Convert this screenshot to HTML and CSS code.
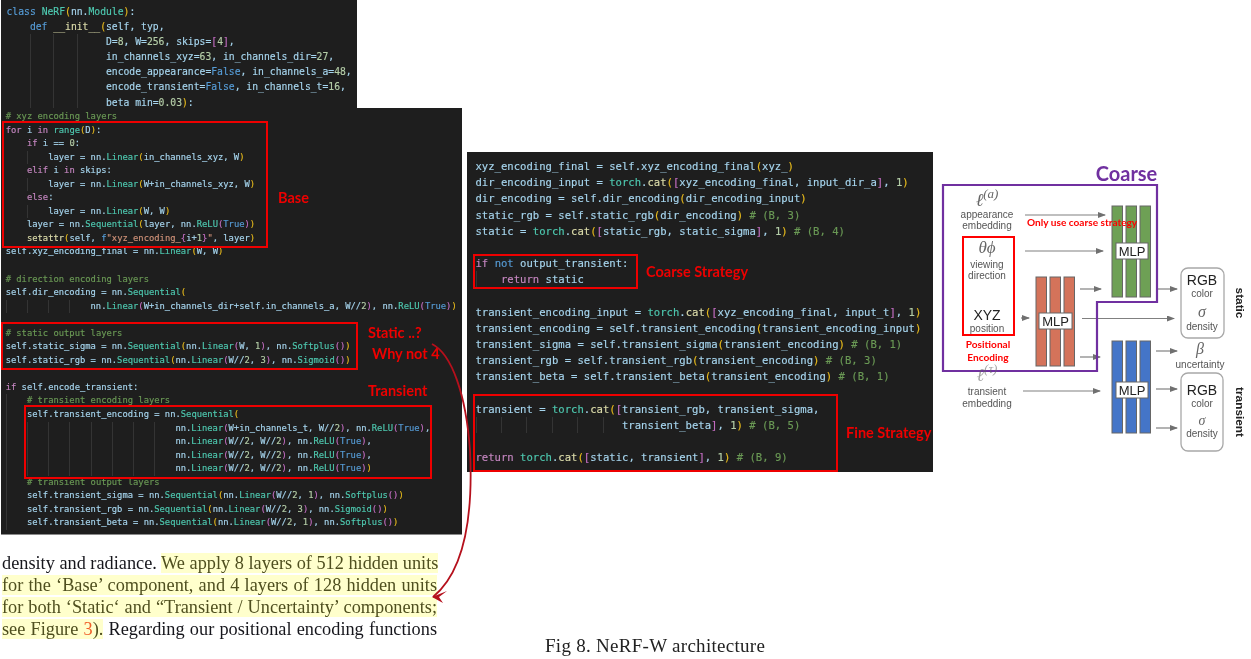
FILE: index.html
```html
<!DOCTYPE html>
<html lang="en">
<head>
<meta charset="utf-8">
<title>Fig 8. NeRF-W architecture</title>
<link rel="stylesheet" href="styles.css">
</head>
<body>
<main class="canvas">

<section class="panel p1">
<div class="l"><span class="b">class</span> <span class="c">NeRF</span><span class="y">(</span>nn.<span class="c">Module</span><span class="y">)</span>:</div>
<div class="l">    <span class="b">def</span> <span class="f">__init__</span><span class="y">(</span>self, typ,</div>
<div class="l">    <i class="g"></i><i class="g"></i><i class="g"></i> D=<span class="n">8</span>, W=<span class="n">256</span>, skips=<span class="p">[</span><span class="n">4</span><span class="p">]</span>,</div>
<div class="l">    <i class="g"></i><i class="g"></i><i class="g"></i> in_channels_xyz=<span class="n">63</span>, in_channels_dir=<span class="n">27</span>,</div>
<div class="l">    <i class="g"></i><i class="g"></i><i class="g"></i> encode_appearance=<span class="b">False</span>, in_channels_a=<span class="n">48</span>,</div>
<div class="l">    <i class="g"></i><i class="g"></i><i class="g"></i> encode_transient=<span class="b">False</span>, in_channels_t=<span class="n">16</span>,</div>
<div class="l">    <i class="g"></i><i class="g"></i><i class="g"></i> beta_min=<span class="n">0.03</span><span class="y">)</span>:</div>
</section>

<section class="panel p2">
<div class="l"><span class="m"># xyz encoding layers</span></div>
<div class="l"><span class="k">for</span> i <span class="k">in</span> <span class="f2">range</span><span class="y">(</span>D<span class="y">)</span>:</div>
<div class="l">    <span class="k">if</span> i == <span class="n">0</span>:</div>
<div class="l">    <i class="g"></i>layer = nn.<span class="c">Linear</span><span class="y">(</span>in_channels_xyz, W<span class="y">)</span></div>
<div class="l">    <span class="k">elif</span> i <span class="k">in</span> skips:</div>
<div class="l">    <i class="g"></i>layer = nn.<span class="c">Linear</span><span class="y">(</span>W+in_channels_xyz, W<span class="y">)</span></div>
<div class="l">    <span class="k">else</span>:</div>
<div class="l">    <i class="g"></i>layer = nn.<span class="c">Linear</span><span class="y">(</span>W, W<span class="y">)</span></div>
<div class="l">    layer = nn.<span class="c">Sequential</span><span class="y">(</span>layer, nn.<span class="c">ReLU</span><span class="p">(</span><span class="b">True</span><span class="p">)</span><span class="y">)</span></div>
<div class="l">    <span class="f">setattr</span><span class="y">(</span>self, <span class="b">f</span><span class="s">"xyz_encoding_</span><span class="p">{</span>i+<span class="n">1</span><span class="p">}</span><span class="s">"</span>, layer<span class="y">)</span></div>
<div class="l">self.xyz_encoding_final = nn.<span class="c">Linear</span><span class="y">(</span>W, W<span class="y">)</span></div>
<div class="l"></div>
<div class="l"><span class="m"># direction encoding layers</span></div>
<div class="l">self.dir_encoding = nn.<span class="c">Sequential</span><span class="y">(</span></div>
<div class="l"><i class="g"></i><i class="g"></i><i class="g"></i><i class="g"></i>nn.<span class="c">Linear</span><span class="p">(</span>W+in_channels_dir+self.in_channels_a, W//<span class="n">2</span><span class="p">)</span>, nn.<span class="c">ReLU</span><span class="p">(</span><span class="b">True</span><span class="p">)</span><span class="y">)</span></div>
<div class="l"></div>
<div class="l"><span class="m"># static output layers</span></div>
<div class="l">self.static_sigma = nn.<span class="c">Sequential</span><span class="y">(</span>nn.<span class="c">Linear</span><span class="p">(</span>W, <span class="n">1</span><span class="p">)</span>, nn.<span class="c">Softplus</span><span class="p">()</span><span class="y">)</span></div>
<div class="l">self.static_rgb = nn.<span class="c">Sequential</span><span class="y">(</span>nn.<span class="c">Linear</span><span class="p">(</span>W//<span class="n">2</span>, <span class="n">3</span><span class="p">)</span>, nn.<span class="c">Sigmoid</span><span class="p">()</span><span class="y">)</span></div>
<div class="l"></div>
<div class="l"><span class="k">if</span> self.encode_transient:</div>
<div class="l"><i class="g"></i><span class="m"># transient encoding layers</span></div>
<div class="l"><i class="g"></i>self.transient_encoding = nn.<span class="c">Sequential</span><span class="y">(</span></div>
<div class="l"><i class="g"></i><i class="g"></i><i class="g"></i><i class="g"></i><i class="g"></i><i class="g"></i><i class="g"></i><i class="g"></i>nn.<span class="c">Linear</span><span class="p">(</span>W+in_channels_t, W//<span class="n">2</span><span class="p">)</span>, nn.<span class="c">ReLU</span><span class="p">(</span><span class="b">True</span><span class="p">)</span>,</div>
<div class="l"><i class="g"></i><i class="g"></i><i class="g"></i><i class="g"></i><i class="g"></i><i class="g"></i><i class="g"></i><i class="g"></i>nn.<span class="c">Linear</span><span class="p">(</span>W//<span class="n">2</span>, W//<span class="n">2</span><span class="p">)</span>, nn.<span class="c">ReLU</span><span class="p">(</span><span class="b">True</span><span class="p">)</span>,</div>
<div class="l"><i class="g"></i><i class="g"></i><i class="g"></i><i class="g"></i><i class="g"></i><i class="g"></i><i class="g"></i><i class="g"></i>nn.<span class="c">Linear</span><span class="p">(</span>W//<span class="n">2</span>, W//<span class="n">2</span><span class="p">)</span>, nn.<span class="c">ReLU</span><span class="p">(</span><span class="b">True</span><span class="p">)</span>,</div>
<div class="l"><i class="g"></i><i class="g"></i><i class="g"></i><i class="g"></i><i class="g"></i><i class="g"></i><i class="g"></i><i class="g"></i>nn.<span class="c">Linear</span><span class="p">(</span>W//<span class="n">2</span>, W//<span class="n">2</span><span class="p">)</span>, nn.<span class="c">ReLU</span><span class="p">(</span><span class="b">True</span><span class="p">)</span><span class="y">)</span></div>
<div class="l"><i class="g"></i><span class="m"># transient output layers</span></div>
<div class="l"><i class="g"></i>self.transient_sigma = nn.<span class="c">Sequential</span><span class="y">(</span>nn.<span class="c">Linear</span><span class="p">(</span>W//<span class="n">2</span>, <span class="n">1</span><span class="p">)</span>, nn.<span class="c">Softplus</span><span class="p">()</span><span class="y">)</span></div>
<div class="l"><i class="g"></i>self.transient_rgb = nn.<span class="c">Sequential</span><span class="y">(</span>nn.<span class="c">Linear</span><span class="p">(</span>W//<span class="n">2</span>, <span class="n">3</span><span class="p">)</span>, nn.<span class="c">Sigmoid</span><span class="p">()</span><span class="y">)</span></div>
<div class="l"><i class="g"></i>self.transient_beta = nn.<span class="c">Sequential</span><span class="y">(</span>nn.<span class="c">Linear</span><span class="p">(</span>W//<span class="n">2</span>, <span class="n">1</span><span class="p">)</span>, nn.<span class="c">Softplus</span><span class="p">()</span><span class="y">)</span></div>
</section>

<section class="panel p3">
<div class="l">xyz_encoding_final = self.xyz_encoding_final<span class="y">(</span>xyz_<span class="y">)</span></div>
<div class="l">dir_encoding_input = <span class="c">torch</span>.<span class="f">cat</span><span class="y">(</span><span class="p">[</span>xyz_encoding_final, input_dir_a<span class="p">]</span>, <span class="n">1</span><span class="y">)</span></div>
<div class="l">dir_encoding = self.dir_encoding<span class="y">(</span>dir_encoding_input<span class="y">)</span></div>
<div class="l">static_rgb = self.static_rgb<span class="y">(</span>dir_encoding<span class="y">)</span> <span class="m"># (B, 3)</span></div>
<div class="l">static = <span class="c">torch</span>.<span class="f">cat</span><span class="y">(</span><span class="p">[</span>static_rgb, static_sigma<span class="p">]</span>, <span class="n">1</span><span class="y">)</span> <span class="m"># (B, 4)</span></div>
<div class="l"></div>
<div class="l"><span class="k">if</span> <span class="b">not</span> output_transient:</div>
<div class="l"><i class="g"></i><span class="k">return</span> static</div>
<div class="l"></div>
<div class="l">transient_encoding_input = <span class="c">torch</span>.<span class="f">cat</span><span class="y">(</span><span class="p">[</span>xyz_encoding_final, input_t<span class="p">]</span>, <span class="n">1</span><span class="y">)</span></div>
<div class="l">transient_encoding = self.transient_encoding<span class="y">(</span>transient_encoding_input<span class="y">)</span></div>
<div class="l">transient_sigma = self.transient_sigma<span class="y">(</span>transient_encoding<span class="y">)</span> <span class="m"># (B, 1)</span></div>
<div class="l">transient_rgb = self.transient_rgb<span class="y">(</span>transient_encoding<span class="y">)</span> <span class="m"># (B, 3)</span></div>
<div class="l">transient_beta = self.transient_beta<span class="y">(</span>transient_encoding<span class="y">)</span> <span class="m"># (B, 1)</span></div>
<div class="l"></div>
<div class="l">transient = <span class="c">torch</span>.<span class="f">cat</span><span class="y">(</span><span class="p">[</span>transient_rgb, transient_sigma,</div>
<div class="l"><i class="g"></i><i class="g"></i><i class="g"></i><i class="g"></i><i class="g"></i><i class="g g3"></i>transient_beta<span class="p">]</span>, <span class="n">1</span><span class="y">)</span> <span class="m"># (B, 5)</span></div>
<div class="l"></div>
<div class="l"><span class="k">return</span> <span class="c">torch</span>.<span class="f">cat</span><span class="y">(</span><span class="p">[</span>static, transient<span class="p">]</span>, <span class="n">1</span><span class="y">)</span> <span class="m"># (B, 9)</span></div>
</section>

<p class="excerpt"><span>density and radiance. <mark>We apply 8 layers of 512 hidden units</mark></span><span><mark>for the ‘Base’ component, and 4 layers of 128 hidden units</mark></span><span><mark>for both ‘Static‘ and “Transient / Uncertainty’ components;</mark></span><span><mark>see Figure <em>3</em>).</mark> Regarding our positional encoding functions</span></p>

<p class="caption">Fig 8. NeRF-W architecture</p>

<div class="box b-base"></div>
<div class="box b-static"></div>
<div class="box b-trans"></div>
<div class="box b-coarse"></div>
<div class="box b-fine"></div>

<span class="note n-base">Base</span>
<span class="note n-static">Static ..?</span>
<span class="note n-why">Why not 4</span>
<span class="note n-trans">Transient</span>
<span class="note n-coarse">Coarse Strategy</span>
<span class="note n-fine">Fine Strategy</span>

<svg class="curve" viewBox="0 0 1251 659" aria-hidden="true">
  <path class="curve-line" d="M432 344C452 354 466 395 470 450C473 510 466 570 433 597"/>
  <path class="curve-head" d="M447 591L432 597L443 603L439 597Z"/>
</svg>

<svg class="diagram" viewBox="935 160 316 300" role="img" aria-label="NeRF-W model diagram">
  <defs>
    <marker id="tip" markerWidth="8" markerHeight="6" refX="7" refY="3" orient="auto" markerUnits="userSpaceOnUse">
      <path class="tip" d="M0 0L8 3L0 6Z"/>
    </marker>
  </defs>

  <g class="bars green">
    <rect x="1112" y="206" width="10.500" height="91"/>
    <rect x="1126" y="206" width="10.500" height="91"/>
    <rect x="1140" y="206" width="10.500" height="91"/>
  </g>
  <g class="bars orange">
    <rect x="1036" y="277" width="10.500" height="89"/>
    <rect x="1050" y="277" width="10.500" height="89"/>
    <rect x="1064" y="277" width="10.500" height="89"/>
  </g>
  <g class="bars blue">
    <rect x="1112" y="341" width="10.500" height="92"/>
    <rect x="1126" y="341" width="10.500" height="92"/>
    <rect x="1140" y="341" width="10.500" height="92"/>
  </g>

  <rect class="mlp" x="1116" y="243" width="32" height="16"/>
  <rect class="mlp" x="1039" y="313" width="33" height="16"/>
  <rect class="mlp" x="1116" y="382" width="32" height="16"/>
  <text class="mlp-t" x="1132" y="256">MLP</text>
  <text class="mlp-t" x="1055.500" y="326">MLP</text>
  <text class="mlp-t" x="1132" y="395">MLP</text>

  <g class="arrows">
    <line x1="1025" y1="215" x2="1105" y2="215"/>
    <line x1="1025" y1="251" x2="1103" y2="251"/>
    <line x1="1080" y1="289" x2="1101" y2="289"/>
    <line x1="1158" y1="289" x2="1177" y2="289"/>
    <line x1="1021" y1="318" x2="1029" y2="318"/>
    <line x1="1082" y1="318.500" x2="1174" y2="318.500"/>
    <line x1="1080" y1="357" x2="1100" y2="357"/>
    <line x1="1156" y1="351" x2="1177" y2="351"/>
    <line x1="1156" y1="389" x2="1177" y2="389"/>
    <line x1="1156" y1="428" x2="1177" y2="428"/>
    <line x1="1023" y1="391" x2="1100" y2="391"/>
  </g>

  <rect class="out" x="1181" y="268" width="43" height="70" rx="7"/>
  <rect class="out" x="1181" y="373" width="42" height="78" rx="7"/>

  <path class="purple" d="M943 185H1157V302H1097V371H943Z"/>
  <rect class="redbox" x="963" y="237" width="51" height="98"/>

  <text class="coarse" x="1126.500" y="181">Coarse</text>

  <text class="math m-l" x="987" y="206">ℓ<tspan class="sup" dy="-8">(a)</tspan></text>
  <text class="lbl" x="987" y="218">appearance</text>
  <text class="lbl" x="987" y="229">embedding</text>
  <text class="red-t only" x="1027" y="226">Only use coarse strategy</text>
  <text class="math m-t" x="987" y="253">θϕ</text>
  <text class="lbl" x="987" y="268">viewing</text>
  <text class="lbl" x="987" y="279">direction</text>
  <text class="big" x="987" y="320">XYZ</text>
  <text class="lbl" x="987" y="332">position</text>
  <text class="red-t mid" x="988" y="348">Positional</text>
  <text class="red-t mid" x="988" y="361">Encoding</text>
  <text class="math m-l faint" x="987" y="381">ℓ<tspan class="sup" dy="-8">(τ)</tspan></text>
  <text class="lbl" x="987" y="395">transient</text>
  <text class="lbl" x="987" y="407">embedding</text>

  <text class="big" x="1202" y="285">RGB</text>
  <text class="lbl" x="1202" y="297">color</text>
  <text class="math m-s" x="1202" y="317">σ</text>
  <text class="lbl" x="1202" y="330">density</text>
  <text class="math m-s" x="1200" y="354">β</text>
  <text class="lbl" x="1200" y="368">uncertainty</text>
  <text class="big" x="1202" y="395">RGB</text>
  <text class="lbl" x="1202" y="407">color</text>
  <text class="math m-s2" x="1202" y="425">σ</text>
  <text class="lbl" x="1202" y="437">density</text>

  <text class="side" transform="translate(1236 303) rotate(90)">static</text>
  <text class="side" transform="translate(1236 412) rotate(90)">transient</text>
</svg>

</main>
</body>
</html>
```

FILE: styles.css
```css
* { box-sizing: border-box; }
html, body { margin: 0; padding: 0; background: #fff; }

.canvas {
  position: relative;
  width: 1251px;
  height: 659px;
  overflow: hidden;
  background: #fff;
  filter: blur(0.45px);
}

/* code screenshots placed on the slide */
.panel {
  position: absolute;
  background: #1e1e1e;
  font-family: "DejaVu Sans Mono", monospace;
  color: #a6d5ee;
  -webkit-text-stroke: 0.15px currentColor;
}
.l { white-space: pre; }
.g {
  display: inline-block;
  width: 4ch;
  height: 100%;
  vertical-align: top;
  border-left: 1px solid #343434;
}
.g3 { width: 3ch; }
.p1 { left: 1px; top: 0; width: 356px; height: 108px; padding: 4px 0 0 5.500px; font-size: 9.720px; }
.p1 .l { height: 15.100px; line-height: 15.100px; }
.p2 { left: 1px; top: 108px; width: 461px; height: 427px; padding: 2px 0 0 4.700px; font-size: 8.820px; border-bottom: 1px solid #8a8a8a; }
.p2 .l { height: 13.550px; line-height: 13.550px; }
.p3 { left: 467px; top: 152px; width: 466px; height: 320px; padding: 6px 0 0 8.500px; font-size: 10.580px; }
.p3 .l { height: 16.200px; line-height: 16.200px; }

/* syntax colours */
.k { color: #c586c0; }
.b { color: #569cd6; }
.c { color: #4ec9b0; }
.f { color: #dcdcaa; }
.f2 { color: #4ec9b0; }
.n { color: #b5cea8; }
.m { color: #6a9955; }
.s { color: #ce9178; }
.y { color: #e8bb1c; }
.p { color: #c56fc4; }

/* paper excerpt */
.excerpt {
  position: absolute;
  left: 2px;
  top: 552px;
  width: 435px;
  margin: 0;
  font: 18.300px/22.100px "Liberation Serif", serif;
  color: #16161c;
}
.excerpt > span { display: block; text-align: justify; text-align-last: justify; white-space: nowrap; }
.excerpt mark { background: #ffffcc; color: #4f4f1f; }
.excerpt em { font-style: normal; color: #f0602a; }

.caption {
  position: absolute;
  left: 545px;
  top: 635px;
  margin: 0;
  font: 19px/22px "Liberation Serif", serif;
  letter-spacing: 0.280px;
  color: #222;
  white-space: nowrap;
}

/* red annotations */
.box { position: absolute; border: 2px solid #ee0000; }
.b-base { left: 2px; top: 121px; width: 266px; height: 127px; }
.b-static { left: 1px; top: 322px; width: 357px; height: 48px; }
.b-trans { left: 24px; top: 405px; width: 408px; height: 74px; }
.b-coarse { left: 473px; top: 254px; width: 165px; height: 35px; }
.b-fine { left: 473px; top: 394px; width: 365px; height: 78px; }

.note {
  position: absolute;
  font: 700 14.500px/18px Lato, sans-serif;
  color: #ee0000;
  white-space: nowrap;
}
.n-base { left: 278px; top: 189px; }
.n-static { left: 368px; top: 324px; }
.n-why { left: 372px; top: 345px; }
.n-trans { left: 368px; top: 382px; }
.n-coarse { left: 646px; top: 263px; }
.n-fine { left: 846px; top: 424px; }

.curve { position: absolute; left: 0; top: 0; width: 1251px; height: 659px; pointer-events: none; }
.curve-line { fill: none; stroke: #b5101c; stroke-width: 1.800px; }
.curve-head { fill: #b5101c; }

/* architecture diagram */
.diagram { position: absolute; left: 935px; top: 160px; width: 316px; height: 300px; }
.diagram text { text-anchor: middle; font-family: "Liberation Sans", sans-serif; }
.bars rect { stroke: #666; stroke-width: 1px; }
.green rect { fill: #6ea055; }
.orange rect { fill: #d4735a; }
.blue rect { fill: #4475c8; }
.mlp { fill: #fff; stroke: #666; stroke-width: 1px; }
.mlp-t { font-size: 13px; fill: #222; }
.arrows line { stroke: #808080; stroke-width: 1.200px; marker-end: url(#tip); }
.tip { fill: #707070; }
.out { fill: #fff; stroke: #a8a8a8; stroke-width: 1.300px; }
.purple { fill: none; stroke: #7030a0; stroke-width: 2.200px; }
.redbox { fill: none; stroke: #f00; stroke-width: 2px; }
.diagram .coarse { font-family: Lato, sans-serif; font-size: 20px; font-weight: 700; fill: #7030a0; }
.lbl { font-size: 10px; fill: #555; }
.big { font-size: 14px; fill: #222; }
.diagram .math { font-family: "Liberation Serif", "DejaVu Serif", serif; font-style: italic; fill: #666; }
.m-l { font-size: 18px; }
.m-t { font-size: 17px; }
.m-s { font-size: 16px; }
.m-s2 { font-size: 14px; }
.sup { font-size: 13px; }
.faint { opacity: 0.6; }
.diagram .red-t { font-family: Lato, sans-serif; font-weight: 700; font-size: 10.100px; fill: #f00; }
.diagram .only { text-anchor: start; }
.diagram .side { font-weight: 700; font-size: 11.800px; fill: #222; }
```
